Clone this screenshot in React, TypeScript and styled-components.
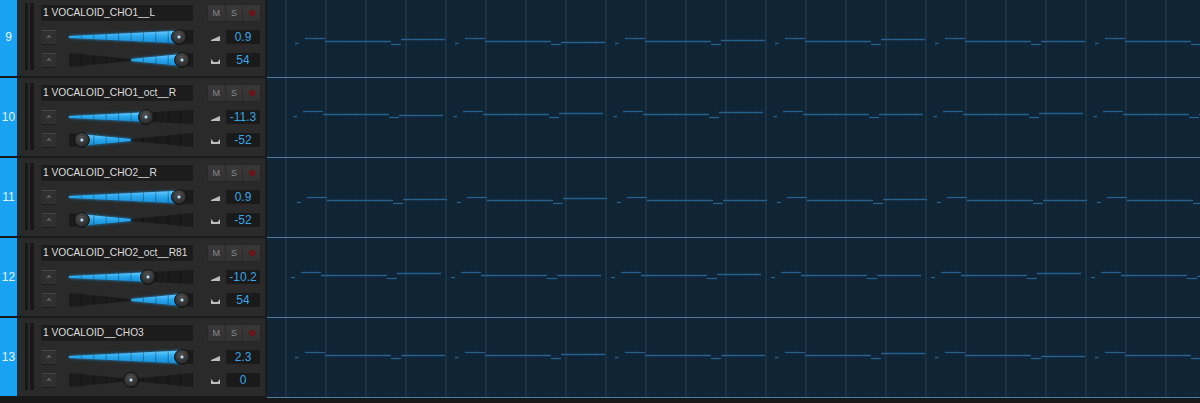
import React, { useId } from 'react';
import styled, { createGlobalStyle } from 'styled-components';

const GlobalStyle = createGlobalStyle`
  html, body {
    margin: 0;
    padding: 0;
    background: #181818;
  }
  body {
    font-family: 'Liberation Sans', Arial, sans-serif;
    overflow: hidden;
  }
`;

type Track = {
  num: number;
  name: string;
  volPos: number;
  vol: string;
  pan: number;
  noteY: number;
  noteX: number;
};

const tracks: Track[] = [
  { num: 9, name: '1 VOCALOID_CHO1__L', volPos: 110, vol: '0.9', pan: 54, noteY: 42, noteX: 28 },
  { num: 10, name: '1 VOCALOID_CHO1_oct__R', volPos: 77, vol: '-11.3', pan: -52, noteY: 35, noteX: 26 },
  { num: 11, name: '1 VOCALOID_CHO2__R', volPos: 110, vol: '0.9', pan: -52, noteY: 41, noteX: 30 },
  { num: 12, name: '1 VOCALOID_CHO2_oct__R81', volPos: 79, vol: '-10.2', pan: 54, noteY: 36, noteX: 24 },
  { num: 13, name: '1 VOCALOID__CHO3', volPos: 113, vol: '2.3', pan: 0, noteY: 36, noteX: 28 },
];

const FADER_W = 124;
const FADER_H = 14;

const Page = styled.div`
  display: flex;
  flex-direction: column;
  margin-top: -2px;
`;

const TrackRow = styled.div`
  display: flex;
  height: 80px;
`;

const NumberCell = styled.div`
  width: 17px;
  flex: none;
  box-sizing: border-box;
  background: #19a2f1;
  border-bottom: 2px solid #1a1a1a;
  color: #e2f3ff;
  font-size: 12px;
  display: flex;
  align-items: center;
  justify-content: center;
`;

const Panel = styled.div`
  width: 248px;
  flex: none;
  box-sizing: border-box;
  display: flex;
  align-items: flex-start;
  padding: 5px 0 0 7px;
  background: #2a2a2a;
  border-left: 1px solid #232323;
  border-bottom: 2px solid #1a1a1a;
`;

const Edge = styled.div`
  width: 2px;
  flex: none;
  background: #1b1b1b;
`;

const Meters = styled.div`
  display: flex;
  gap: 2px;
  height: 67px;
`;

const MeterBar = styled.div<{ $w: number }>`
  width: ${(p) => p.$w}px;
  background: #181818;
`;

const Controls = styled.div`
  width: 219px;
  margin: 2px 0 0 7px;
  display: flex;
  flex-direction: column;
`;

const NameRow = styled.div`
  display: flex;
  justify-content: space-between;
  height: 16px;
`;

const NameBox = styled.div`
  width: 152px;
  box-sizing: border-box;
  padding-left: 2px;
  background: #1c1c1c;
  color: #dcdcdc;
  font-size: 10.2px;
  line-height: 16px;
  white-space: nowrap;
  overflow: hidden;
`;

const ButtonGroup = styled.div`
  width: 52px;
  display: flex;
  background: #2b2b2b;
  box-shadow: 0 0 0 1px #262626;
`;

const StateButton = styled.div`
  flex: 1;
  display: flex;
  align-items: center;
  justify-content: center;
  background: linear-gradient(#393939, #323232);
  border-right: 1px solid #2a2a2a;
  color: #8a8a8a;
  font-size: 9px;
  &:last-child {
    border-right: none;
  }
`;

const RecDot = styled.span`
  width: 6px;
  height: 6px;
  border-radius: 50%;
  background: #6e1414;
`;

const ParamRow = styled.div<{ $gap: number }>`
  display: flex;
  align-items: center;
  height: 15px;
  margin-top: ${(p) => p.$gap}px;
`;

const UpButton = styled.div`
  width: 14px;
  height: 14px;
  margin-left: 1px;
  box-sizing: border-box;
  background: #303030;
  border-top: 1px solid #474747;
  box-shadow: 0 1px 0 #1d1d1d;
  color: #a8a8a8;
  font-size: 8px;
  line-height: 14px;
  text-align: center;
`;

const FaderBox = styled.div`
  width: ${FADER_W}px;
  height: ${FADER_H}px;
  margin-left: 13px;
  svg {
    display: block;
    overflow: visible;
  }
`;

const ParamIcon = styled.svg`
  width: 9px;
  height: 6px;
  margin: 2px 0 0 18px;
  flex: none;
`;

const ValueBox = styled.div`
  width: 34px;
  height: 14px;
  margin-left: 6px;
  background: #1a1a1a;
  color: #37a5e6;
  font-size: 12px;
  line-height: 14px;
  text-align: center;
  white-space: nowrap;
`;

const Lane = styled.div`
  flex: 1;
  box-sizing: border-box;
  height: 80px;
  overflow: hidden;
  background-color: #0f2434;
  background-image: linear-gradient(90deg, #1a3244 0 2px, transparent 2px),
    linear-gradient(90deg, #112838 0 1px, transparent 1px);
  background-size: 40px 100%, 10px 100%;
  background-position: 18px 0, 8px 0;
  border-bottom: 1px solid #4d7b99;
  svg {
    display: block;
  }
`;

const half = FADER_H / 2;

function wedge(x: number, mode: 'vol' | 'pan') {
  if (mode === 'vol') return 2 + (12 * x) / FADER_W;
  return 2 + (12 * Math.abs(x - FADER_W / 2)) / (FADER_W / 2);
}

function shape(from: number, to: number, mode: 'vol' | 'pan') {
  const a = wedge(from, mode) / 2;
  const b = wedge(to, mode) / 2;
  return `${from},${half - a} ${to},${half - b} ${to},${half + b} ${from},${half + a}`;
}

const Fader: React.FC<{ mode: 'vol' | 'pan'; pos: number }> = ({ mode, pos }) => {
  const id = useId().replace(/:/g, '');
  const c = FADER_W / 2;
  const parts = mode === 'vol' ? [shape(0, FADER_W, 'vol')] : [shape(0, c, 'pan'), shape(c, FADER_W, 'pan')];
  const fill = mode === 'vol' ? shape(0, pos, 'vol') : pos === c ? '' : shape(c, pos, 'pan');
  const ticks = Array.from({ length: 10 }, (_, i) => (i + 1) * 12.4);
  return (
    <FaderBox>
      <svg width={FADER_W} height={FADER_H}>
        <defs>
          <linearGradient id={`g${id}`} x1="0" y1="0" x2="0" y2="1">
            <stop offset="0" stopColor="#6acbff" />
            <stop offset="0.45" stopColor="#2aa9ee" />
            <stop offset="1" stopColor="#168bd2" />
          </linearGradient>
          <radialGradient id={`k${id}`} cx="0.45" cy="0.35" r="0.7">
            <stop offset="0" stopColor="#555" />
            <stop offset="1" stopColor="#1c1c1c" />
          </radialGradient>
          <filter id={`f${id}`} x="-20%" y="-80%" width="140%" height="260%">
            <feGaussianBlur stdDeviation="1.8" />
          </filter>
          <clipPath id={`c${id}`}>
            {parts.map((p) => (
              <polygon key={p} points={p} />
            ))}
          </clipPath>
        </defs>
        {parts.map((p) => (
          <polygon key={p} points={p} fill="#1b1b1b" />
        ))}
        {fill && (
          <>
            <polygon points={fill} fill="#1c9ae8" opacity="0.9" filter={`url(#f${id})`} />
            <polygon points={fill} fill={`url(#g${id})`} />
          </>
        )}
        <g clipPath={`url(#c${id})`}>
          {ticks.map((t) => (
            <line key={t} x1={t} x2={t} y1="0" y2={FADER_H} stroke="rgba(0,0,0,0.3)" strokeWidth="1" />
          ))}
        </g>
        <circle cx={pos} cy={half} r="7.5" fill={`url(#k${id})`} stroke="#121212" strokeWidth="1" />
        <circle cx={pos} cy={half} r="5" fill="none" stroke="#3e3e3e" strokeWidth="0.8" />
        <circle cx={pos} cy={half} r="1.5" fill="#b8e4ff" />
      </svg>
    </FaderBox>
  );
};

const VolIcon = () => (
  <ParamIcon viewBox="0 0 9 6">
    <polygon points="0,5 9,1 9,6 0,6" fill="#bdbdbd" />
  </ParamIcon>
);

const PanIcon = () => (
  <ParamIcon viewBox="0 0 9 6">
    <polygon points="0,1 2.5,4 6.5,4 9,1 9,6 0,6" fill="#bdbdbd" />
  </ParamIcon>
);

// one bar of the vocal line, repeated every 160px with small variations
const pattern: [number, number, number][] = [
  [0, 4, 3],
  [10, 20, -2],
  [30, 66, 1],
  [96, 10, 4],
  [106, 44, 0],
];
const jitter = [0, 1, -1, 2, 0, -1, 1];

function notesFor(t: Track) {
  const segs: { x1: number; x2: number; y: number }[] = [];
  for (let k = 0; t.noteX + k * 160 < 940; k++) {
    const start = t.noteX + k * 160;
    pattern.forEach(([off, len, dy], i) => {
      const j = i === 4 ? jitter[(k + t.num) % jitter.length] : 0;
      segs.push({ x1: start + off, x2: start + off + len, y: t.noteY + dy + j });
    });
  }
  return segs;
}

const Notes: React.FC<{ track: Track }> = ({ track }) => (
  <svg width="940" height="79">
    {notesFor(track).map((s, i) => (
      <line key={i} x1={s.x1} x2={s.x2} y1={s.y + 0.5} y2={s.y + 0.5} stroke="#27608a" strokeWidth="1.3" />
    ))}
  </svg>
);

const TrackLine: React.FC<{ track: Track }> = ({ track }) => (
  <TrackRow>
    <NumberCell>{track.num}</NumberCell>
    <Panel>
      <Meters>
        <MeterBar $w={3} />
        <MeterBar $w={4} />
      </Meters>
      <Controls>
        <NameRow>
          <NameBox>{track.name}</NameBox>
          <ButtonGroup>
            <StateButton>M</StateButton>
            <StateButton>S</StateButton>
            <StateButton>
              <RecDot />
            </StateButton>
          </ButtonGroup>
        </NameRow>
        <ParamRow $gap={8}>
          <UpButton>^</UpButton>
          <Fader mode="vol" pos={track.volPos} />
          <VolIcon />
          <ValueBox>{track.vol}</ValueBox>
        </ParamRow>
        <ParamRow $gap={8}>
          <UpButton>^</UpButton>
          <Fader mode="pan" pos={FADER_W / 2 + track.pan * 0.945} />
          <PanIcon />
          <ValueBox>{track.pan}</ValueBox>
        </ParamRow>
      </Controls>
    </Panel>
    <Edge />
    <Lane>
      <Notes track={track} />
    </Lane>
  </TrackRow>
);

const App: React.FC = () => {
  return (
    <>
      <GlobalStyle />
      <Page>
        {tracks.map((t) => (
          <TrackLine key={t.num} track={t} />
        ))}
      </Page>
    </>
  );
};

export default App;
